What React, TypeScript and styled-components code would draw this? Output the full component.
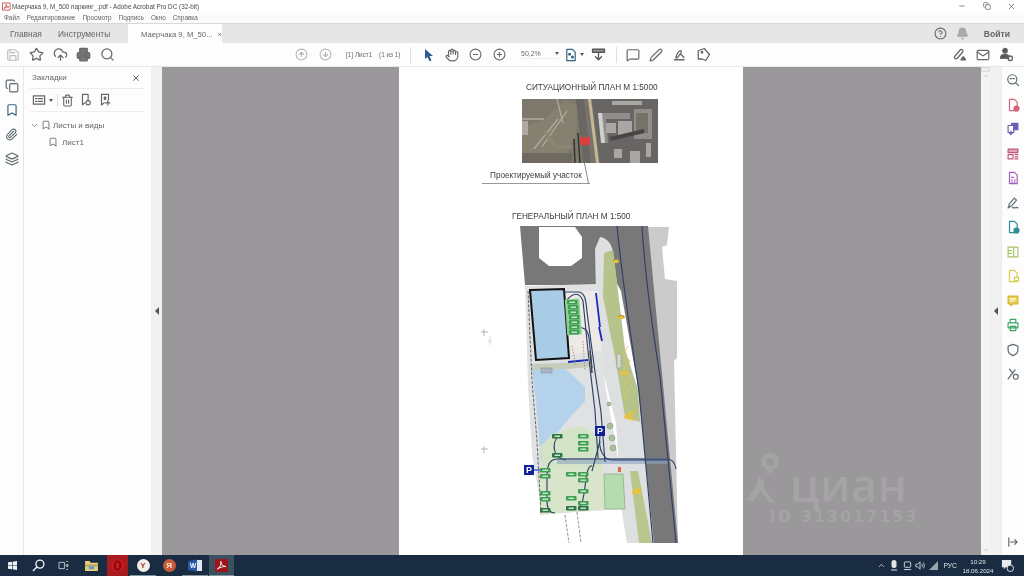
import React from "react";
import styled, { createGlobalStyle } from "styled-components";
import {
  Save, Star, CloudUpload, Printer, Search, CircleArrowUp, CircleArrowDown, Hand, CircleMinus, CirclePlus,
  MessageSquare, Pen, CircleHelp, Bell, Mail, Copy, Bookmark, Paperclip, Layers, X, ChevronDown, Trash2, Minus, ChevronUp,
} from "lucide-react";

const Global = createGlobalStyle`
  html, body { margin: 0; padding: 0; width: 1024px; height: 576px; overflow: hidden; background: #fff; }
  * { box-sizing: border-box; }
`;

const Screen = styled.div`
  width: 1024px; height: 576px; display: flex; flex-direction: column; overflow: hidden;
  font-family: "Liberation Sans", Arial, sans-serif; color: #555; filter: blur(0.45px);
`;
const TitleBar = styled.div`
  height: 12px; flex: none; background: #fff; display: flex; align-items: center; padding-left: 2px; gap: 1px;
  font-size: 6.35px; color: #4a4a4a; white-space: nowrap;
`;
const TitleText = styled.span`flex: 1;`;
const WinButtons = styled.div`display: flex; align-items: center; color: #555;`;
const WinButton = styled.div`width: 25px; height: 12px; display: flex; align-items: center; justify-content: center;`;
const MenuBar = styled.div`
  height: 11px; flex: none; background: #fbfbfb; display: flex; align-items: center; padding-left: 4px; gap: 7px;
  font-size: 6.4px; color: #666;
`;
const TabBar = styled.div`
  height: 20px; flex: none; background: #e6e6e6; border-top: 1px solid #d8d8d8; display: flex; align-items: stretch;
  font-size: 8.4px; color: #666;
`;
const HomeTab = styled.div`width: 48px; padding-left: 10px; display: flex; align-items: center;`;
const ToolsTab = styled.div`width: 80px; padding-left: 10px; display: flex; align-items: center;`;
const ActiveTab = styled.div`
  width: 94px; background: #fdfdfd; padding-left: 13px; display: flex; align-items: center; gap: 4px;
  font-size: 7.7px; white-space: nowrap; margin-bottom: -1px;
`;
const TabRight = styled.div`margin-left: auto; display: flex; align-items: center; color: #666;`;
const LoginText = styled.span`font-size: 8.6px; font-weight: bold; color: #666; margin: 0 14px 0 15px;`;
const BellIcon = styled.span`margin-left: 9px; display: flex; color: #a8a8a8;`;
const Toolbar = styled.div`
  height: 24px; flex: none; background: #fdfdfd; border-bottom: 1px solid #e8e8e8; display: flex; align-items: center; padding-left: 1.5px;
`;
const Tool = styled.div<{ $c?: string; $w?: number }>`
  width: ${(p) => p.$w ?? 23.5}px; height: 20px; flex: none; display: flex; align-items: center; justify-content: center;
  color: ${(p) => p.$c ?? "#666"};
`;
const Spacer = styled.div<{ $w: number }>`width: ${(p) => p.$w}px; flex: none;`;
const VSpace = styled.div<{ $h: number }>`height: ${(p) => p.$h}px; flex: none;`;
const Sep = styled.div`width: 1px; height: 16px; background: #dedede; flex: none;`;
const PageField = styled.span<{ $w: number }>`
  width: ${(p) => p.$w}px; flex: none; font-size: 6.4px; color: #6b6b6b; white-space: nowrap;
`;
const ZoomField = styled.div`
  width: 38px; flex: none; font-size: 7px; color: #6b6b6b; display: flex; justify-content: space-between; align-items: center;
  border-bottom: 1px solid #eee; padding-bottom: 1px;
`;
const Caret = styled.span`
  width: 0; height: 0; border-left: 2.5px solid transparent; border-right: 2.5px solid transparent; border-top: 3px solid #555;
  display: inline-block; flex: none;
`;
const Main = styled.div`flex: 1; min-height: 0; display: flex; background: #fdfdfd;`;
const LeftRail = styled.div`
  width: 24px; flex: none; border-right: 1px solid #e6e6e6; display: flex; flex-direction: column; align-items: center; padding-top: 9px; gap: 5.5px; color: #5c6a6e;
`;
const RailItem = styled.div`height: 19px; display: flex; align-items: center; justify-content: center;`;
const Panel = styled.div`width: 127px; flex: none; padding: 0 7px 0 6px; display: flex; flex-direction: column;`;
const PanelHead = styled.div`
  height: 22px; display: flex; align-items: center; justify-content: space-between; border-bottom: 1px solid #eaeaea;
  font-size: 8px; color: #666; padding: 0 3px 0 2px;
`;
const PanelTools = styled.div`
  height: 23px; display: flex; align-items: center; border-bottom: 1px solid #eee; color: #666;
`;
const PanelTool = styled.div`width: 18.5px; display: flex; justify-content: center; flex: none;`;
const SmallSep = styled.div`width: 1px; height: 13px; background: #ddd; margin: 0 1px 0 4px;`;
const TreeRow = styled.div<{ $indent: number; $top: number; $gap: number }>`
  display: flex; align-items: center; gap: ${(p) => p.$gap}px; height: 12px; font-size: 8px; color: #666;
  padding-left: ${(p) => p.$indent}px; margin-top: ${(p) => p.$top}px; white-space: nowrap;
`;
const Splitter = styled.div<{ $w: number }>`
  width: ${(p) => p.$w}px; flex: none; background: #f1f1f1; display: flex; align-items: center; justify-content: center; padding-bottom: 1px;
`;
const Arrow = styled.span`
  width: 0; height: 0; border-top: 4px solid transparent; border-bottom: 4px solid transparent; border-right: 4px solid #555;
`;
const Viewer = styled.div`
  flex: 1; min-width: 0; position: relative; background: #9a989a; display: flex; overflow: hidden;
`;
const DocPage = styled.div`
  width: 344px; height: 100%; flex: none; background: #fff; padding-top: 15px; margin-left: 237px;
  display: flex; flex-direction: column; color: #3a3a3a;
`;
const DocTitle = styled.div<{ $left: number }>`
  font-size: 8.2px; line-height: 12px; height: 12px; padding-left: ${(p) => p.$left}px; white-space: nowrap; color: #3b3b3b;
`;
const Aerial = styled.svg`width: 136px; height: 64px; margin: 5px 0 0 123px; display: block; flex: none;`;
const Callout = styled.div`
  width: 108px; height: 21px; margin-left: 83px; border-bottom: 1px solid #999; font-size: 8.2px; padding: 8px 0 0 8px;
  position: relative; white-space: nowrap; color: #3c3c3c; flex: none;
`;
const CalloutLine = styled.span`
  position: absolute; right: 3px; top: 0; width: 1px; height: 21px; background: #888; transform: skewX(11deg);
`;
const PlanSvg = styled.svg`width: 206px; height: 324px; margin: 0 0 0 79px; display: block; flex: none;`;
const Watermark = styled.div`
  position: absolute; left: 585px; top: 382px; width: 180px; color: #a5a3a5; display: flex; flex-direction: column;
`;
const WatermarkTop = styled.div`display: flex; align-items: flex-start; height: 56px;`;
const WatermarkName = styled.span`font-size: 45px; line-height: 30px; height: 30px; font-weight: 600; letter-spacing: 0.5px; margin: 21px 0 0 11px; font-family: "Open Sans", sans-serif;`;
const WatermarkId = styled.span`font-size: 15.5px; line-height: 20px; font-weight: bold; letter-spacing: 2.3px; font-family: "DejaVu Sans", sans-serif; white-space: nowrap; margin: 2px 0 0 23px;`;
const Scrollbar = styled.div`
  width: 9px; flex: none; background: #f5f4f5; display: flex; flex-direction: column; align-items: center; color: #bbb; justify-content: space-between; padding-bottom: 1px;
`;
const ScrollTop = styled.div`display: flex; flex-direction: column; align-items: center;`;
const Grip = styled.div`width: 9px; height: 5px; border: 1px solid #ddd; background: #eee;`;
const RightRail = styled.div`
  width: 23px; flex: none; border-left: 1px solid #ececec; display: flex; flex-direction: column; align-items: center; padding-top: 1px;
`;
const RightItem = styled.div`height: 24.5px; flex: none; display: flex; align-items: center; justify-content: center;`;
const RightExit = styled.div`margin-top: auto; margin-bottom: 3px; color: #555; height: 20px; display: flex; align-items: center;`;
const Taskbar = styled.div`
  height: 21px; flex: none; background: #1a2c41; display: flex; align-items: center; color: #e4e8ea; padding-left: 2px;
`;
const TaskItem = styled.div<{ $w: number; $bg?: string; $mark?: boolean }>`
  width: ${(p) => p.$w}px; height: 21px; flex: none; display: flex; align-items: center; justify-content: center; position: relative;
  background: ${(p) => p.$bg ?? "transparent"};
  border-bottom: ${(p) => (p.$mark ? "1px solid #7f95a0" : "none")};
`;
const TrayRow = styled.div`margin-left: auto; display: flex; align-items: center; color: #dfe4e7;`;
const TrayText = styled.span`font-size: 6.8px; margin: 0 5px 0 5px; color: #dfe4e7;`;
const Clock = styled.div`font-size: 6.2px; line-height: 9px; text-align: center; width: 32px; color: #dfe4e7;`;
const Notify = styled.div`width: 30px; padding-right: 4px; display: flex; justify-content: center;`;
const Circle = styled.span<{ $bg: string; $fg?: string; $size?: number }>`
  width: ${(p) => p.$size ?? 13}px; height: ${(p) => p.$size ?? 13}px; border-radius: 50%; background: ${(p) => p.$bg};
  color: ${(p) => p.$fg ?? "#fff"}; font-size: 8px; font-weight: bold; display: flex; align-items: center; justify-content: center;
`;

const Ico = ({ s = 16, c = "currentColor", w = 1.7, children }: { s?: number; c?: string; w?: number; children: React.ReactNode }) => (
  <svg width={s} height={s} viewBox="0 0 20 20" fill="none" stroke={c} strokeWidth={w} strokeLinecap="round" strokeLinejoin="round">{children}</svg>
);

const doc = "M5 2h7l4 4v12H5z";
const rightTools: { c: string; el: React.ReactNode }[] = [
  { c: "#d3627a", el: <><path d={doc} /><circle cx="15" cy="15" r="3.6" fill="#d3627a" /></> },
  { c: "#6a62b8", el: <><path d="M8 2h9v9H8z" fill="#6a62b8" /><path d="M3 5h8v10H3z" fill="#fff" /><path d="M7 13v5M5 16l2 2 2-2" /></> },
  { c: "#c2587f", el: <><path d="M3 3h14v5H3z" fill="#d9a3b9" /><path d="M3 11h7v6H3zM13 11h4M13 14h4M13 17h4" /></> },
  { c: "#a35fc0", el: <><path d={doc} /><path d="M8 13h1M12 13h1M8 16h1M12 16h1M8 9h3" /></> },
  { c: "#5d6a70", el: <path d="M3 17l2-6 7-8 3 3-7 8zM9 17c2-2 3 1 4 0s2-1 4 0" /> },
  { c: "#2f8f94", el: <><path d={doc} /><circle cx="15" cy="15" r="3.6" fill="#2f8f94" /></> },
  { c: "#a9c56c", el: <path d="M3 3h14v14H3zM11 3v14M3 8h5M3 12h5" /> },
  { c: "#d5cc4a", el: <><path d={doc} /><path d="M12 12h6v5h-6z" fill="#fff" /></> },
  { c: "#d6b72f", el: <><path d="M3 3h14v11h-7l-3 3v-3H3z" fill="#e7cf55" /><path d="M6 7h8M6 10h5" stroke="#fff" /></> },
  { c: "#3da564", el: <><path d="M6 2h8v5H6zM3 7h14v7H3zM6 12h8v6H6z" /></> },
  { c: "#5d6a70", el: <path d="M10 2l7 2.5V10c0 4-3 6.5-7 8-4-1.5-7-4-7-8V4.500z" /> },
  { c: "#5d6a70", el: <><path d="M3 17L13 4M5 3l5 6" /><circle cx="14" cy="14" r="3.500" /></> },
];

const Aerialpic = () => (
  <Aerial viewBox="0 0 136 64" preserveAspectRatio="none">
    <rect width="136" height="64" fill="#767370" />
    <path d="M0 0h58l10 64H0z" fill="#7c786b" />
    <path d="M0 28l20-6 22-20 14 4-2 30-14 28H0z" fill="#85806f" />
    <path d="M12 50L36 20M20 48L45 12M0 20h22M35 0l6 24" stroke="#aeac9c" strokeWidth="1.3" />
    <path d="M22 32l12 16h18" stroke="#8f8574" strokeWidth="3" fill="none" />
    <path d="M0 22h6v14H0z" fill="#aeab9e" />
    <path d="M54 0h8l7 64h-8z" fill="#6a6763" />
    <path d="M66 0h3l8 64h-3z" fill="#c6b992" />
    <path d="M70 0h66v64H78z" fill="#686664" />
    <path d="M76 14h32v6H84l2 24h-6zM112 10h18v30h-18z" fill="#8f8e8c" />
    <path d="M90 2h30v4H90zM84 24h10v10H84zM124 44h5v14h-5zM92 50h8v9h-8zM108 52h10v12h-10zM96 22h14v14H96z" fill="#a8a7a4" />
    <path d="M76 14h4l3 30h-4z" fill="#d2d0cc" />
    <path d="M114 14h12v20h-12z" fill="#767268" />
    <path d="M88 40l34-8" stroke="#484646" strokeWidth="4" />
    <path d="M56 34l2 30M52 40l1 24" stroke="#333" strokeWidth="1.500" />
    <rect x="58" y="38" width="10" height="8" fill="#d8403e" />
    <path d="M0 54h50v10H0z" fill="#6e6a62" />
  </Aerial>
);

const Car = ({ x, y, dark }: { x: number; y: number; dark?: boolean }) => (
  <g>
    <rect x={x} y={y} width="10.500" height="4.600" rx=".8" fill={dark ? "#2c7446" : "#3f9f55"} />
    <rect x={x + 2.500} y={y + 1.500} width="5.500" height="1.500" fill="#c4e4c4" />
  </g>
);
const Sign = ({ x, y, w = 10 }: { x: number; y: number; w?: number }) => (
  <g>
    <rect x={x} y={y} width={w} height={w} fill="#0f1f96" />
    <text x={x + w / 2} y={y + w - 2} fontSize="9" fontWeight="bold" textAnchor="middle" fill="#fff" fontFamily="Liberation Sans">P</text>
  </g>
);
const cars: [number, number, boolean?][] = [
  [567, 299], [568, 304], [568, 309], [569, 314], [569, 319], [569, 324], [569, 329],
  [578, 433], [578, 440], [578, 446],
  [552, 433, true], [552, 452, true], [540, 467], [540, 473], [540, 490], [540, 496], [540, 507, true],
  [566, 471], [578, 471], [578, 477], [578, 488], [566, 495], [578, 500], [566, 505, true], [578, 505, true],
];

const Plan = () => (
  <PlanSvg viewBox="478 222 206 324">
    <path d="M484 328v7M481 331h7M484 445v7M481 448h7" stroke="#999" strokeWidth=".7" />
    <path d="M490 335l0 9M492 340h-4" stroke="#ccc" strokeWidth=".7" />
    <path d="M648 226h21l-2 18-5 2 3 32 12 2v77l-3 3 4 182h-25z" fill="#cbcbcb" />
    <path d="M520 225h128l30 317h-25l-16-162-16-90-18-34-5-2-2 30h-71z" fill="#787878" />
    <path d="M600 236c7 1 11 6 13 14l12 98 13 40 16 154h-27l-5-30-6-90-15-60-5-70-1-44z" fill="#dedfe0" />
    <path d="M604 252l9-3 6 50 6 50 13 40 2 32-15-5-10-60-12-60z" fill="#b6c48b" />
    <path d="M630 470l8 0 14 72h-13z" fill="#b9c78f" />
    <path d="M539 226h36l7 10v21l-11 8h-22l-10-8v-22z" fill="#fff" />
    <path d="M525 285l72-2 8 100 22 125-85 5-10-60-4-70z" fill="#e0e1e3" />
    <path d="M563 290h35l4 60-36 4z" fill="#ece9e6" />
    <path d="M530 289l34-1 5 69-33 2z" fill="#a9cce6" stroke="#111" strokeWidth="2" />
    <path d="M530 363l58-2 4 5-60 5z" fill="#c6ccba" />
    <path d="M532 369l34-1 19 18v14l-20 22-12 15-12 24-5-60z" fill="#b5d2ec" />
    <rect x="541" y="367" width="11" height="5" fill="#aab5c4" stroke="#889" strokeWidth=".5" />
    <path d="M552 433l30-8 16 10 6 40-60-1-4-28z" fill="#d3e3c6" />
    <path d="M540 466h62l6 42-68 6z" fill="#d8e5cb" />
    <path d="M604 473h19l2 35h-20z" fill="#b5dcae" stroke="#7f9a7e" strokeWidth=".6" />
    <path d="M557 457h110l2 6H557z" fill="#8da4c4" opacity=".6" />
    <g fill="none" stroke="#2f4068" strokeWidth="1.150">
      <path d="M617 225c5 50 12 100 22 165l14 152" />
      <path d="M642 225c3 50 10 100 18 150l16 167" />
      <path d="M564 291h14c7 0 8 8 9 20l8 60 6 40 4 50" />
      <path d="M566 300c8-10 14-8 17 0l5 50 7 60 3 47" />
      <path d="M576 327c8-2 12 2 13 10l3 30" />
      <path d="M558 435c-6 8-6 22 8 24" />
      <path d="M600 435c-2 14 4 24 12 24h56" />
      <path d="M557 458h110c6 0 8 4 9 10" />
      <path d="M557 458c-10 0-10 12-10 20v22c0 6 2 12 8 12" />
      <path d="M592 465c-8-2-6 38-12 40" />
      <path d="M528 469h12" stroke="#1a3ac0" />
      <path d="M600 440l-8 30" />
    </g>
    <rect x="566" y="298" width="14.500" height="36" fill="#8fd08f" transform="rotate(-4 572 316)" />
    <path d="M596 292l4 34M599 326l3 14M568 361l20-2" stroke="#1b2bb8" strokeWidth="1.800" fill="none" />
    <path d="M590 350l2 22" stroke="#444" strokeWidth="1.500" />
    <path d="M528 290l4 90 5 60 4 72" stroke="#555" strokeWidth=".9" strokeDasharray="3 1.500" fill="none" />
    <path d="M583 340l2 30M572 345l4 20" stroke="#a88f72" strokeWidth=".9" strokeDasharray="1.500 1.500" />
    <path d="M565 514l4 28M577 511l4 31" stroke="#777" strokeWidth=".8" strokeDasharray="3 1.500" fill="none" />
    <rect x="617" y="353" width="4" height="14" fill="#d8d8d8" stroke="#888" strokeWidth=".5" />
    <path d="M628 345l-5 8 7 7-6 8 6 7-6 8 5 7-5 8" stroke="#e2c65a" strokeWidth="1" fill="none" />
    <g fill="#e8c23c">
      <ellipse cx="616" cy="260" rx="3" ry="2" />
      <ellipse cx="621" cy="316" rx="4" ry="2" />
      <ellipse cx="624" cy="372" rx="4" ry="2" />
      <path d="M625 414l10-5-4 6 4 5-11-3z" />
      <path d="M633 489l9-3-3 4 3 3-10 0z" />
    </g>
    <path d="M613 260l3-2 3 2M618 316l3-2 3 2" stroke="#555" strokeWidth=".5" fill="none" />
    <rect x="618" y="466" width="3" height="5" fill="#e46a3c" />
    <g fill="#aac09a" stroke="#77936f" strokeWidth=".5">
      <circle cx="610" cy="425" r="3" /><circle cx="612" cy="437" r="3" /><circle cx="613" cy="447" r="3" /><circle cx="609" cy="403" r="2" />
    </g>
    {cars.map(([x, y, d], i) => <Car key={i} x={x} y={y} dark={d} />)}
    <Sign x={595} y={425} />
    <Sign x={524} y={464} />
  </PlanSvg>
);

export default function App() {
  return (
    <Screen>
      <Global />
      <TitleBar>
        <Ico s={9} c="#b33"><path d="M2 2h16v16H2z" /><path d="M5 14c3-2 5-7 4-9 0 3 3 6 6 6-3 0-7 1-10 3z" /></Ico>
        <TitleText>Маерчака 9, М_500 паркинг_.pdf - Adobe Acrobat Pro DC (32-bit)</TitleText>
        <WinButtons>
          <WinButton><Minus size={8} /></WinButton>
          <WinButton><Copy size={8} /></WinButton>
          <WinButton><X size={9} /></WinButton>
        </WinButtons>
      </TitleBar>
      <MenuBar>
        <span>Файл</span><span>Редактирование</span><span>Просмотр</span><span>Подпись</span><span>Окно</span><span>Справка</span>
      </MenuBar>
      <TabBar>
        <HomeTab>Главная</HomeTab>
        <ToolsTab>Инструменты</ToolsTab>
        <ActiveTab>Маерчака 9, М_50...<X size={7} strokeWidth={3} /></ActiveTab>
        <TabRight>
          <CircleHelp size={13} />
          <BellIcon><Bell size={13} fill="currentColor" /></BellIcon>
          <LoginText>Войти</LoginText>
        </TabRight>
      </TabBar>
      <Toolbar>
        <Tool $c="#bdbdbd"><Save size={14} /></Tool>
        <Tool><Star size={15} /></Tool>
        <Tool><CloudUpload size={15} /></Tool>
        <Tool><Printer size={15} fill="#777" /></Tool>
        <Tool><Search size={15} /></Tool>
        <Spacer $w={171} />
        <Tool $c="#b5b5b5"><CircleArrowUp size={13} /></Tool>
        <Tool $c="#b5b5b5"><CircleArrowDown size={13} /></Tool>
        <Spacer $w={9} />
        <PageField $w={33}>[1] Лист1</PageField>
        <PageField $w={31}>(1 из 1)</PageField>
        <Sep />
        <Spacer $w={6} />
        <Tool $c="#2c5b93"><svg width="14" height="14" viewBox="0 0 14 14"><path d="M3 1l8 7H7.500l2 4.500-2 .8L5.500 9 3 11z" fill="currentColor" /></svg></Tool>
        <Tool><Hand size={14} /></Tool>
        <Tool><CircleMinus size={13} /></Tool>
        <Tool><CirclePlus size={13} /></Tool>
        <Spacer $w={10} />
        <ZoomField>50,2%<Caret /></ZoomField>
        <Spacer $w={2} />
        <Tool $w={19}><Ico s={14} c="#33647d"><path d="M4 2h8l4 4v12H4z" /><path d="M7 8h2v2H7zM11 12h2v2h-2z" fill="#33647d" /></Ico></Tool>
        <Caret />
        <Spacer $w={3} />
        <Tool><Ico s={15} c="#555"><path d="M2 3h16v4H2z" fill="#999" /><path d="M10 8v9M6 13l4 4 4-4" /></Ico></Tool>
        <Spacer $w={5.5} />
        <Sep />
        <Spacer $w={4} />
        <Tool><MessageSquare size={14} /></Tool>
        <Tool><Pen size={14} /></Tool>
        <Tool><Ico s={15}><path d="M3 17h13M5 14c2-6 5-10 7-9s-3 8-6 10M11 9l5 5" /></Ico></Tool>
        <Tool><Ico s={15}><path d="M3 5l8-3 7 8-5 8-5-2H3z" /><circle cx="8" cy="7" r="1" /></Ico></Tool>
        <Spacer $w={232.5} />
        <Tool><Ico s={15}><path d="M4 12l7-8c2-2 5 1 3 3l-7 8c-3 2-5-1-3-3z" /><path d="M12 17l3-4 3 4z" fill="#555" /></Ico></Tool>
        <Tool><Mail size={14} /></Tool>
        <Tool><Ico s={15}><circle cx="8" cy="5" r="3" fill="#555" /><path d="M2 15c0-4 3-5 6-5s5 1 5 3v2z" fill="#555" /><circle cx="15" cy="15" r="3" /></Ico></Tool>
      </Toolbar>
      <Main>
        <LeftRail>
          <RailItem><Copy size={14} /></RailItem>
          <RailItem><Bookmark size={14} color="#33647d" /></RailItem>
          <RailItem><Paperclip size={13} /></RailItem>
          <RailItem><Layers size={14} /></RailItem>
        </LeftRail>
        <Panel>
          <PanelHead>Закладки<X size={10} strokeWidth={2} color="#444" /></PanelHead>
          <PanelTools>
            <PanelTool><Ico s={14}><path d="M2 4h16v12H2z" /><path d="M5 8h2M5 12h2M9 8h6M9 12h6" /></Ico></PanelTool>
            <Caret />
            <SmallSep />
            <PanelTool><Trash2 size={13} /></PanelTool>
            <PanelTool><Ico s={14}><path d="M5 2h8v8M5 2v15l3-3" /><circle cx="13" cy="14" r="3" /></Ico></PanelTool>
            <PanelTool><Ico s={14}><path d="M5 2h10v8M5 2v15l4-3" /><path d="M9 6h2v3H9zM14 11v6M11 14h6" /></Ico></PanelTool>
          </PanelTools>
          <TreeRow $indent={0} $top={7} $gap={2}>
            <ChevronDown size={9} />
            <Bookmark size={10} />
            <span>Листы и виды</span>
          </TreeRow>
          <TreeRow $indent={18} $top={5} $gap={4}>
            <Bookmark size={10} />
            <span>Лист1</span>
          </TreeRow>
        </Panel>
        <Splitter $w={11}><Arrow /></Splitter>
        <Viewer>
          <DocPage>
            <DocTitle $left={127}>СИТУАЦИОННЫЙ ПЛАН М 1:5000</DocTitle>
            <Aerialpic />
            <Callout>Проектируемый участок<CalloutLine /></Callout>
            <VSpace $h={27} />
            <DocTitle $left={113}>ГЕНЕРАЛЬНЫЙ ПЛАН М 1:500</DocTitle>
            <Plan />
          </DocPage>
          <Watermark>
            <WatermarkTop>
              <svg width="32" height="56" viewBox="0 0 32 56" fill="currentColor">
                <path fillRule="evenodd" d="M23 4c6 0 9 4 9 9 0 4-5 7-9 12-4-5-9-8-9-12 0-5 3-9 9-9zm0 5a4 4 0 1 0 0 8 4 4 0 0 0 0-8z" />
                <path d="M12 28l6 5-1 6 11 15-6-1-8-11-8 10-6-1 9-14z" />
              </svg>
              <WatermarkName>циан</WatermarkName>
            </WatermarkTop>
            <WatermarkId>ID 313017153</WatermarkId>
          </Watermark>
        </Viewer>
        <Scrollbar>
          <ScrollTop><Grip /><ChevronUp size={8} /></ScrollTop>
          <ChevronDown size={8} />
        </Scrollbar>
        <Splitter $w={11}><Arrow /></Splitter>
        <RightRail>
          <RightItem><Ico s={14} c="#5d6a70"><circle cx="9" cy="9" r="6.500" /><path d="M14 14l4 4M6 8h2M10 8h2" /></Ico></RightItem>
          {rightTools.map((t, i) => (
            <RightItem key={i}><Ico s={14} c={t.c}>{t.el}</Ico></RightItem>
          ))}
          <RightExit><Ico s={12} c="#555"><path d="M3 3v14M6 10h11M13 6l4 4-4 4" /></Ico></RightExit>
        </RightRail>
      </Main>
      <Taskbar>
        <TaskItem $w={20}><svg width="9" height="9" viewBox="0 0 10 10" fill="#eef1f3"><path d="M0 1.500l4.500-.7V4.700H0zM5.200.7L10 0v4.700H5.200zM0 5.300h4.500v3.900L0 8.500zM5.200 5.300H10V10l-4.800-.7z" /></svg></TaskItem>
        <Spacer $w={3} />
        <TaskItem $w={26}><svg width="13" height="13" viewBox="0 0 14 14" fill="none" stroke="#f2f4f5" strokeWidth="1.400"><circle cx="8.500" cy="5.500" r="4.300" /><path d="M5.300 8.700L1 13" /></svg></TaskItem>
        <TaskItem $w={24}><svg width="11" height="9" viewBox="0 0 12 10" fill="none" stroke="#c8ced2"><path d="M1 1.500h6v7H1zM9 .5h2M9 4h2v2H9zM9 9.500h2" /></svg></TaskItem>
        <Spacer $w={3} />
        <TaskItem $w={26}><svg width="13" height="11" viewBox="0 0 14 12"><path d="M0 1h5l1 2h8v9H0z" fill="#e8cf7c" /><path d="M0 5h14v2H0z" fill="#b5a35c" /><path d="M4 7h6v3H4z" fill="#54a0c8" /></svg></TaskItem>
        <Spacer $w={3} />
        <TaskItem $w={21} $bg="#a61d20"><Circle $bg="#d0181c" $size={13}><svg width="9" height="11" viewBox="0 0 9 11" fill="none" stroke="#7e0d10" strokeWidth="2"><ellipse cx="4.500" cy="5.500" rx="2.800" ry="4.300" /></svg></Circle></TaskItem>
        <Spacer $w={2} />
        <TaskItem $w={26} $mark><Circle $bg="#f2efe9" $fg="#a33a22" $size={13}>Y</Circle></TaskItem>
        <TaskItem $w={26}><Circle $bg="#c85a35" $fg="#f8e6d8" $size={13}>Я</Circle></TaskItem>
        <TaskItem $w={26} $mark><svg width="14" height="13" viewBox="0 0 14 13"><path d="M6 1h8v11H6z" fill="#dfe8f3" /><path d="M0 2l9-1.500v12L0 11z" fill="#2a5aa6" /><text x="2" y="9" fontSize="6.500" fontWeight="bold" fill="#fff" fontFamily="Liberation Sans">W</text></svg></TaskItem>
        <Spacer $w={1} />
        <TaskItem $w={25} $bg="#3c5160" $mark><svg width="13" height="13" viewBox="0 0 14 14"><rect width="14" height="14" rx="1" fill="#9c1518" /><path d="M2.500 11c3-2 4.500-6 3.800-8.500-.2 3.500 2.500 5.500 5.500 5.500-3.500 0-7 1-9.300 3z" fill="none" stroke="#fff" strokeWidth="1" /></svg></TaskItem>
        <TrayRow>
          <ChevronUp size={9} />
          <Spacer $w={4} />
          <svg width="8" height="11" viewBox="0 0 8 11" fill="#dfe4e7"><rect x="1.500" width="5" height="8" rx="2.500" /><path d="M1 9.500h6v1H1z" /></svg>
          <Spacer $w={5} />
          <svg width="9" height="11" viewBox="0 0 10 12" fill="none" stroke="#dfe4e7"><rect x="1.500" y="2" width="7" height="6" rx="1" /><path d="M1 10.500h8" /></svg>
          <Spacer $w={3} />
          <svg width="10" height="9" viewBox="0 0 12 10" fill="none" stroke="#dfe4e7"><path d="M1 3.500h2l3-3v9l-3-3H1zM8 3c1 1 1 3 0 4M10 1.500c1.500 2 1.500 5 0 7" /></svg>
          <Spacer $w={4} />
          <svg width="9" height="9" viewBox="0 0 10 10" fill="#9aa6ad"><path d="M0 10L10 0v10z" /></svg>
          <TrayText>РУС</TrayText>
          <Clock>10:29<br />18.06.2024</Clock>
          <Notify><svg width="13" height="13" viewBox="0 0 14 14"><path d="M1 1h10v8H5l-2 2V9H1z" fill="#e6eaec" /><circle cx="10" cy="10" r="3.500" fill="#1a2c41" stroke="#e6eaec" /></svg></Notify>
        </TrayRow>
      </Taskbar>
    </Screen>
  );
}
